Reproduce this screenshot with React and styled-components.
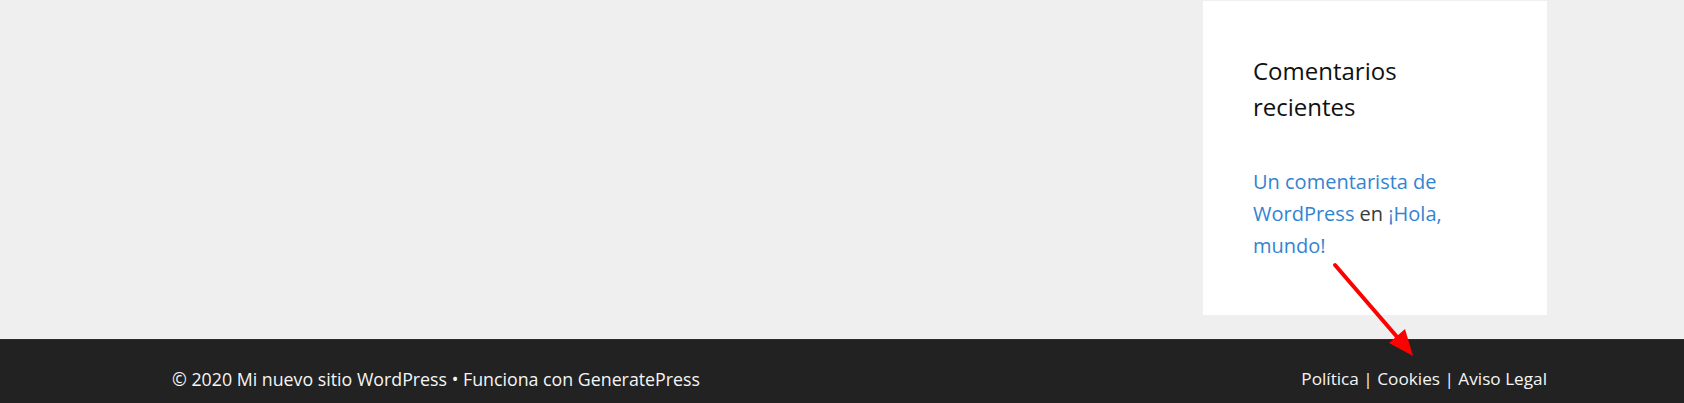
import React from 'react';
import styled, { createGlobalStyle } from 'styled-components';

const GlobalStyle = createGlobalStyle`
  * { box-sizing: border-box; }
  body {
    margin: 0;
    background: #efefef;
    font-family: "Open Sans", "Noto Sans", sans-serif;
    color: #3a3a3a;
  }
`;

const Page = styled.div`
  position: relative;
  width: 1684px;
  height: 403px;
  overflow: hidden;
  display: flex;
  flex-direction: column;
`;

const Main = styled.div`
  height: 339px;
  width: 1440px;
  margin: 0 auto;
  padding: 1px 15px 0 0;
  display: grid;
  grid-template-columns: 1fr 344px;
`;

const Content = styled.div``;

const Widget = styled.aside`
  background: #fff;
  height: 314px;
  padding: 52px 50px 0 50px;
`;

const WidgetTitle = styled.h2`
  margin: 0 0 41px;
  font-size: 24px;
  font-weight: 400;
  line-height: 36px;
  color: #111;
`;

const CommentText = styled.p`
  margin: 0;
  font-size: 20px;
  line-height: 32px;
  color: #3a3a3a;
`;

const Link = styled.a`
  color: #3284d2;
  text-decoration: none;
`;

const Footer = styled.footer`
  flex: 1;
  background: #222;
  border-top: 1px solid #2d2d2d;
`;

const FooterInner = styled.div`
  padding: 24px 137px 0 172px;
  display: flex;
  justify-content: space-between;
  font-size: 17.8px;
  line-height: 30px;
  color: #f5f5f5;
`;

const FooterLinks = styled.div`
  font-size: 17.2px;
`;

const Arrow = styled.svg`
  position: absolute;
  left: 0;
  top: 0;
  pointer-events: none;
`;

export default function App() {
  return (
    <Page>
      <GlobalStyle />
      <Main>
        <Content />
        <Widget>
          <WidgetTitle>Comentarios recientes</WidgetTitle>
          <CommentText>
            <Link href="#">Un comentarista de WordPress</Link> en{' '}
            <Link href="#">¡Hola, mundo!</Link>
          </CommentText>
        </Widget>
      </Main>
      <Footer>
        <FooterInner>
          <span>© 2020 Mi nuevo sitio WordPress • Funciona con GeneratePress</span>
          <FooterLinks>Política | Cookies | Aviso Legal</FooterLinks>
        </FooterInner>
      </Footer>
      <Arrow width="1684" height="403" viewBox="0 0 1684 403">
        <line x1="1335" y1="265" x2="1398" y2="338" stroke="#ff0000" strokeWidth="4" strokeLinecap="round" />
        <polygon points="1413,356 1389,343 1405,329" fill="#ff0000" />
      </Arrow>
    </Page>
  );
}
